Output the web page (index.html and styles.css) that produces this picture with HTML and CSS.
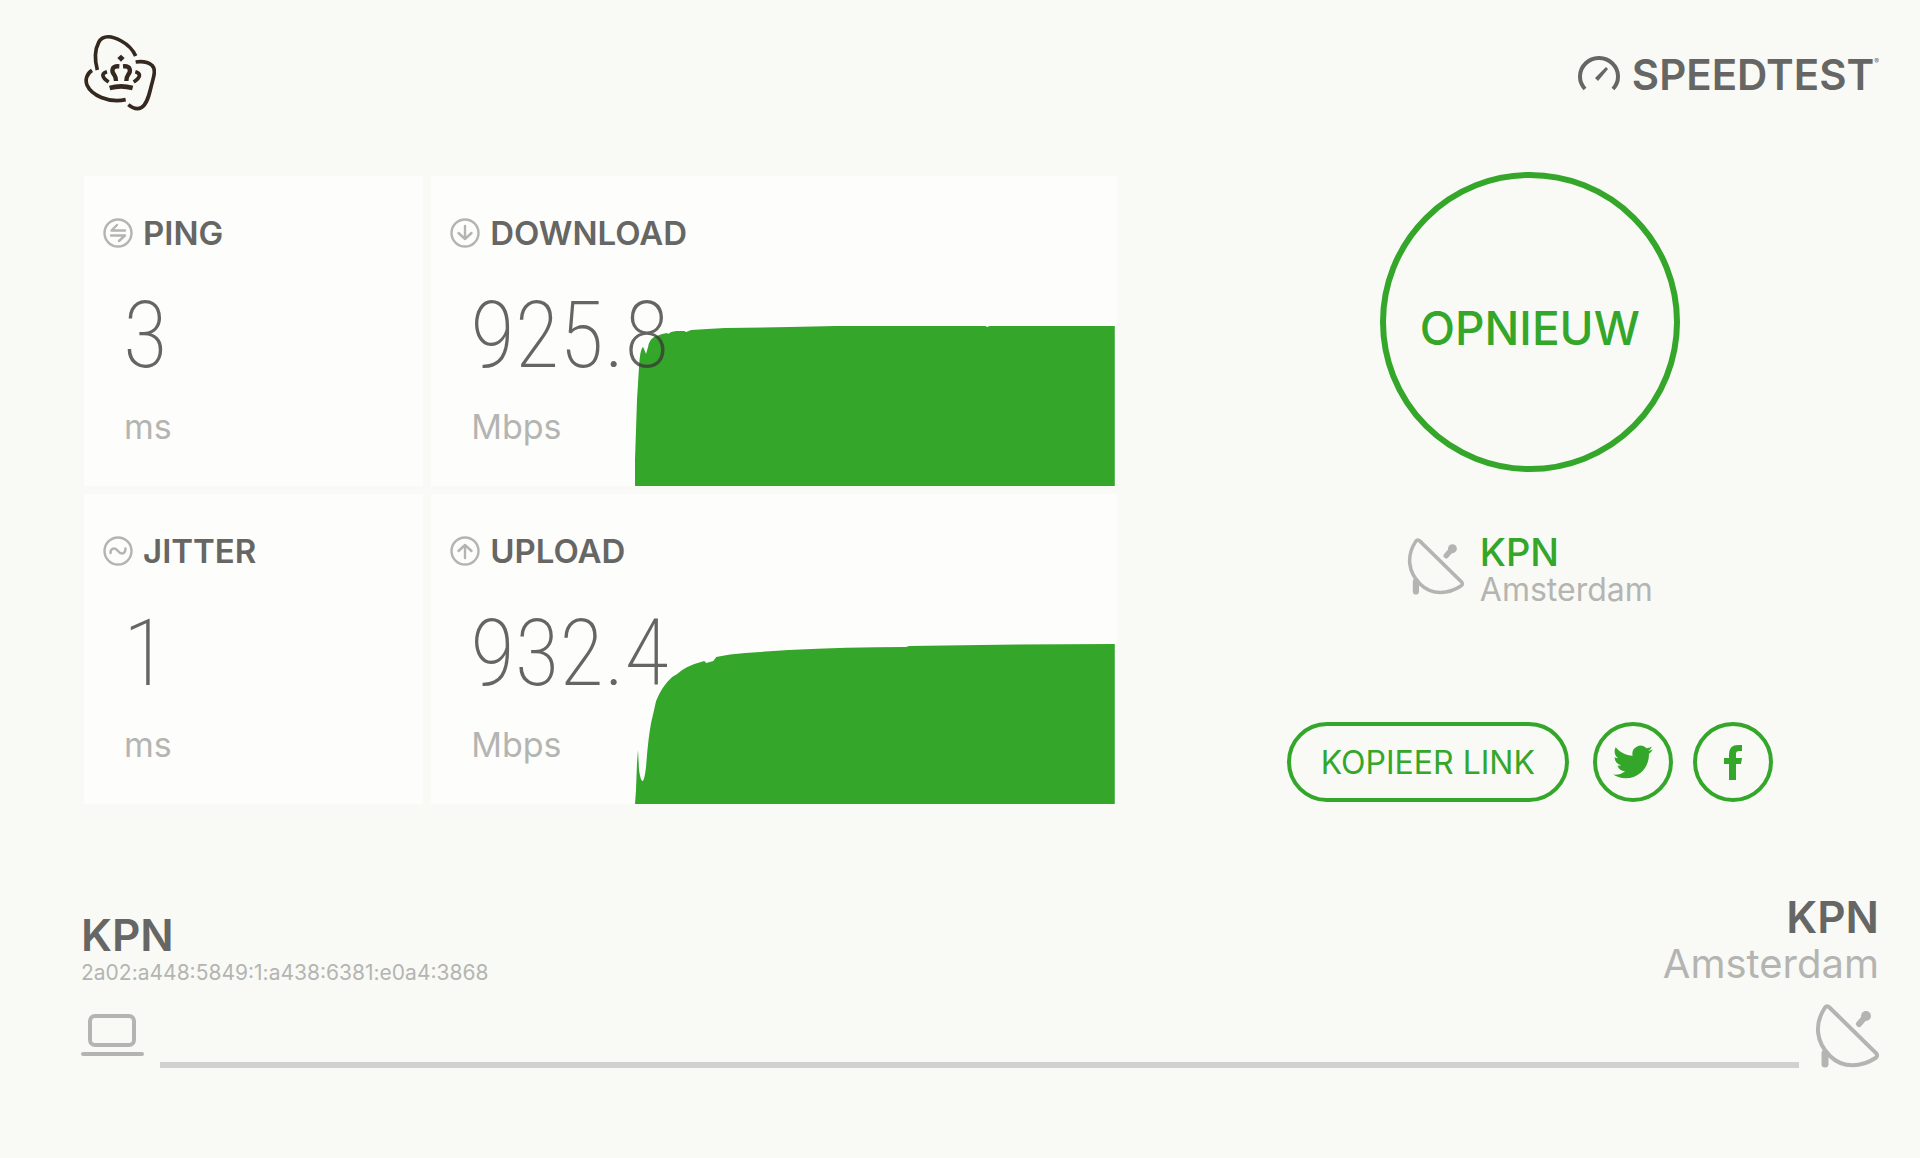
FILE: index.html
```
<!DOCTYPE html>
<html lang="nl">
<head>
  <meta charset="UTF-8">
  <meta name="viewport" content="width=device-width, initial-scale=1.0">
  <title>KPN Speedtest</title>
  <link rel="stylesheet" href="styles.css">
</head>
<body>
  <!-- shared icon, used in the server block and in the footer -->
  <svg class="sprite" aria-hidden="true">
    <symbol id="dish" viewBox="0 0 64 64">
      <path d="M10 3.500Q12 1 14.500 3.500L61 49Q63.500 52 60.500 54C47 63 28 65 15 52C1 38 -1 20 10 3.500Z" fill="none" stroke="currentColor" stroke-width="4"/>
      <path d="M10 49V60" fill="none" stroke="currentColor" stroke-width="7" stroke-linecap="round"/>
      <path d="M44 20L50 13" fill="none" stroke="currentColor" stroke-width="6" stroke-linecap="round"/>
      <circle cx="51" cy="12" r="5" fill="currentColor"/>
    </symbol>
  </svg>

  <header class="header">
    <a href="#" aria-label="KPN">
      <svg class="logo" viewBox="40 42 216 231" fill="none" stroke="#35291f" stroke-width="11">
        <path d="M80 150C72 120 72 90 84 67C97 43 126 49 152 63C174 75 188 92 195 108"/>
        <path d="M195 126C215 123 233 127 244 136C256 149 250 166 245 186C237 213 233 250 213 262C200 270 185 264 173 254"/>
        <path d="M64 151C48 161 43 180 49 195C62 225 112 250 165 239"/>
        <path d="M117 204Q151 194 186 204" stroke-width="14"/>
        <path d="M109 155C90 160 94 174 114 186"/>
        <path d="M194 155C213 160 209 174 189 186"/>
        <path d="M146 139C120 137 123 156 131 165Q136 172 136 183" stroke-width="13"/>
        <path d="M157 139C183 137 180 156 172 165Q167 172 167 183" stroke-width="13"/>
        <path d="M151 104L162 114L151 125L140 114Z" fill="#35291f" stroke="none"/>
      </svg>
    </a>
    <a class="speedtest" href="#">
      <svg class="gauge" viewBox="0 0 42 36" fill="none" stroke="currentColor">
        <path d="M7 33A19 18.500 0 1 1 35 33" stroke-width="4"/>
        <path d="M17 22L28 11L30 13L20 25Z" fill="currentColor" stroke="none"/>
      </svg>
      <span>SPEEDTEST</span><sup>®</sup>
    </a>
  </header>

  <main class="main">
    <section class="results">
      <div class="card">
        <h2 class="card-title">
          <svg class="icon" viewBox="0 0 30 30"><circle cx="15" cy="15" r="13.500"/><path d="M22 12.500H8.500L14 7M8 17.500H22L16 23"/></svg>
          PING
        </h2>
        <div class="value">3</div>
        <div class="unit">ms</div>
      </div>

      <div class="card">
        <svg class="graph" viewBox="0 0 478 310" preserveAspectRatio="none">
          <path d="M0 310L0 284L2 224L4 191Q5 173 8 171L9 173L11 178L13 171Q14 164 19 161L27 158L32 157L33 158L36 156L41 155H49L51 156L56 154L72 153L90 152L154 151L200 150H349L351 151L353 150H478V310Z"/>
        </svg>
        <h2 class="card-title">
          <svg class="icon" viewBox="0 0 30 30"><circle cx="15" cy="15" r="13.500"/><path d="M15 8V21M8.500 15L15 21L21.500 15"/></svg>
          DOWNLOAD
        </h2>
        <div class="value">925.8</div>
        <div class="unit">Mbps</div>
      </div>

      <div class="card">
        <h2 class="card-title">
          <svg class="icon" viewBox="0 0 30 30"><circle cx="15" cy="15" r="13.500"/><path d="M7.500 17C7.500 12 12 11 15 15S22.500 18 22.500 12.500"/></svg>
          JITTER
        </h2>
        <div class="value">1</div>
        <div class="unit">ms</div>
      </div>

      <div class="card">
        <svg class="graph" viewBox="0 0 478 310" preserveAspectRatio="none">
          <path d="M0 310L1 296L2 269L3 256L4 276Q7 296 10 280L11 273Q13 245 16 229L19 216L21 207Q27 192 37 183L42 180Q50 172 69 167L71 169L78 167L81 163Q94 160 110 159L153 156Q210 153 270 153L273 152Q370 150 478 150V310Z"/>
        </svg>
        <h2 class="card-title">
          <svg class="icon" viewBox="0 0 30 30"><circle cx="15" cy="15" r="13.500"/><path d="M15 22V9M8.500 15L15 9L21.500 15"/></svg>
          UPLOAD
        </h2>
        <div class="value">932.4</div>
        <div class="unit">Mbps</div>
      </div>
    </section>

    <section class="actions">
      <button class="again" type="button">OPNIEUW</button>
      <div class="server">
        <svg class="server-icon"><use href="#dish"/></svg>
        <div>
          <a class="server-name" href="#">KPN</a>
          <div class="server-city">Amsterdam</div>
        </div>
      </div>
      <div class="share">
        <button class="copy" type="button">KOPIEER LINK</button>
        <a class="round" href="#" aria-label="Twitter">
          <svg class="twitter" viewBox="0 0 24 24"><path d="M23.950 4.570a10 10 0 0 1-2.820.780 4.960 4.960 0 0 0 2.160-2.720c-.950.550-2 .950-3.130 1.180a4.920 4.920 0 0 0-8.380 4.480C7.690 8.090 4.070 6.130 1.640 3.160a4.820 4.820 0 0 0-.670 2.480c0 1.710.870 3.210 2.190 4.100a4.900 4.900 0 0 1-2.230-.620v.060a4.920 4.920 0 0 0 3.950 4.830 5 5 0 0 1-2.210.090 4.940 4.940 0 0 0 4.600 3.420A9.870 9.870 0 0 1 0 19.540a13.990 13.990 0 0 0 7.550 2.210c9.050 0 14-7.500 14-13.980 0-.210 0-.420-.020-.630a9.940 9.940 0 0 0 2.420-2.570z"/></svg>
        </a>
        <a class="round" href="#" aria-label="Facebook">
          <svg class="facebook" viewBox="0 0 18 35"><path d="M5 35V19H0V13H5V9Q5 0 14 0H18V6H15Q12 6 12 9V13H18L17 19H12V35Z"/></svg>
        </a>
      </div>
    </section>
  </main>

  <footer class="footer">
    <div class="hosts">
      <div class="client">
        <div class="host-name">KPN</div>
        <div class="ip">2a02:a448:5849:1:a438:6381:e0a4:3868</div>
      </div>
      <div class="host">
        <div class="host-name">KPN</div>
        <div class="city">Amsterdam</div>
      </div>
    </div>
    <div class="connection">
      <svg class="laptop" viewBox="0 0 63 42" fill="none" stroke="currentColor" stroke-width="4">
        <rect x="9" y="2" width="44" height="29" rx="5"/>
        <path d="M2 40H61" stroke-linecap="round"/>
      </svg>
      <div class="line"></div>
      <svg class="dish"><use href="#dish"/></svg>
    </div>
  </footer>
</body>
</html>
```
FILE: styles.css
```
* {
  box-sizing: border-box;
}

body {
  margin: 0;
  padding: 34px 41px 80px 84px;
  background-color: #f9faf6;
  color: #666664;
  font-family: Inter, "Liberation Sans", sans-serif;
}

a {
  color: inherit;
  text-decoration: none;
}

svg {
  display: block;
}

.sprite {
  position: absolute;
  width: 0;
  height: 0;
}

/* Header */
.header {
  display: flex;
  justify-content: space-between;
}

.logo {
  width: 72px;
  height: 77px;
}

.speedtest {
  display: flex;
  align-items: center;
  height: 80px;
  font-size: 42px;
  font-weight: 600;
}

.gauge {
  width: 42px;
  height: 36px;
  margin-right: 12px;
}

.speedtest sup {
  align-self: flex-start;
  margin-top: 24px;
  font-size: 7px;
  font-weight: 400;
  line-height: 8px;
}

/* Results */
.main {
  display: grid;
  grid-template-columns: 1032fr 698fr;
  gap: 64px;
  margin-top: 58px;
}

.results {
  display: grid;
  grid-template-columns: 339fr 685fr;
  gap: 8px;
  margin-top: 4px;
}

.card {
  position: relative;
  height: 310px;
  padding: 33px 19px;
  background-color: #fdfdfc;
}

.card-title {
  display: flex;
  align-items: center;
  gap: 10px;
  margin: 0;
  font-size: 33px;
  font-weight: 600;
  line-height: 48px;
}

.icon {
  width: 30px;
  height: 30px;
  fill: none;
  stroke: #b4b5b2;
  stroke-width: 2.4;
  stroke-linecap: round;
  stroke-linejoin: round;
}

.graph {
  position: absolute;
  right: 2px;
  bottom: 0;
  width: 70%;
  height: 100%;
  fill: #34a62a;
}

.value {
  position: relative;
  margin: 23px 0 0 20px;
  color: rgba(58, 58, 56, 0.78);
  font-family: "Roboto Condensed", "Liberation Sans Narrow", sans-serif;
  font-size: 92px;
  font-weight: 250;
  line-height: 112px;
}

.unit {
  margin: 15px 0 0 21px;
  color: #b4b5b2;
  font-size: 34px;
  line-height: 40px;
}

/* Actions */
.actions {
  display: flex;
  flex-direction: column;
  align-items: center;
}

.again {
  width: 300px;
  height: 300px;
  padding: 12px 0 0;
  border: 6px solid #34a62a;
  border-radius: 50%;
  background: none;
  color: #34a62a;
  font-family: inherit;
  font-size: 46px;
  font-weight: 450;
  cursor: pointer;
}

.server {
  display: flex;
  gap: 16px;
  margin-top: 60px;
}

.server-icon {
  width: 57px;
  height: 57px;
  margin-top: 6px;
  color: #b4b5b2;
}

.server-name {
  display: block;
  color: #34a62a;
  font-size: 38px;
  font-weight: 500;
  line-height: 40px;
}

.server-city {
  color: #b4b5b2;
  font-size: 32px;
  line-height: 36px;
}

.share {
  display: flex;
  gap: 20px;
  margin-top: 114px;
}

.copy {
  height: 80px;
  margin-right: 4px;
  padding: 0 30px;
  border: 4px solid #34a62a;
  border-radius: 40px;
  background: none;
  color: #34a62a;
  font-family: inherit;
  font-size: 32px;
  cursor: pointer;
}

.round {
  display: flex;
  align-items: center;
  justify-content: center;
  width: 80px;
  height: 80px;
  border: 4px solid #34a62a;
  border-radius: 50%;
  fill: #34a62a;
}

.twitter {
  width: 40px;
  height: 40px;
}

.facebook {
  width: 18px;
  height: 35px;
}

/* Footer */
.footer {
  margin: 90px 0 0 -3px;
}

.hosts {
  display: flex;
  align-items: flex-end;
  justify-content: space-between;
}

.host {
  text-align: right;
}

.host-name {
  font-size: 44px;
  font-weight: 600;
  line-height: 46px;
}

.ip,
.city {
  color: #b4b5b2;
}

.ip {
  font-size: 21px;
  line-height: 30px;
}

.city {
  font-size: 40px;
  line-height: 48px;
}

.connection {
  display: flex;
  gap: 16px;
  margin-top: 16px;
  color: #b4b5b2;
}

.laptop {
  width: 63px;
  height: 42px;
  margin-top: 10px;
}

.line {
  flex: 1;
  align-self: flex-end;
  height: 6px;
  background-color: #d1d2cf;
}

.dish {
  width: 64px;
  height: 64px;
}
```
